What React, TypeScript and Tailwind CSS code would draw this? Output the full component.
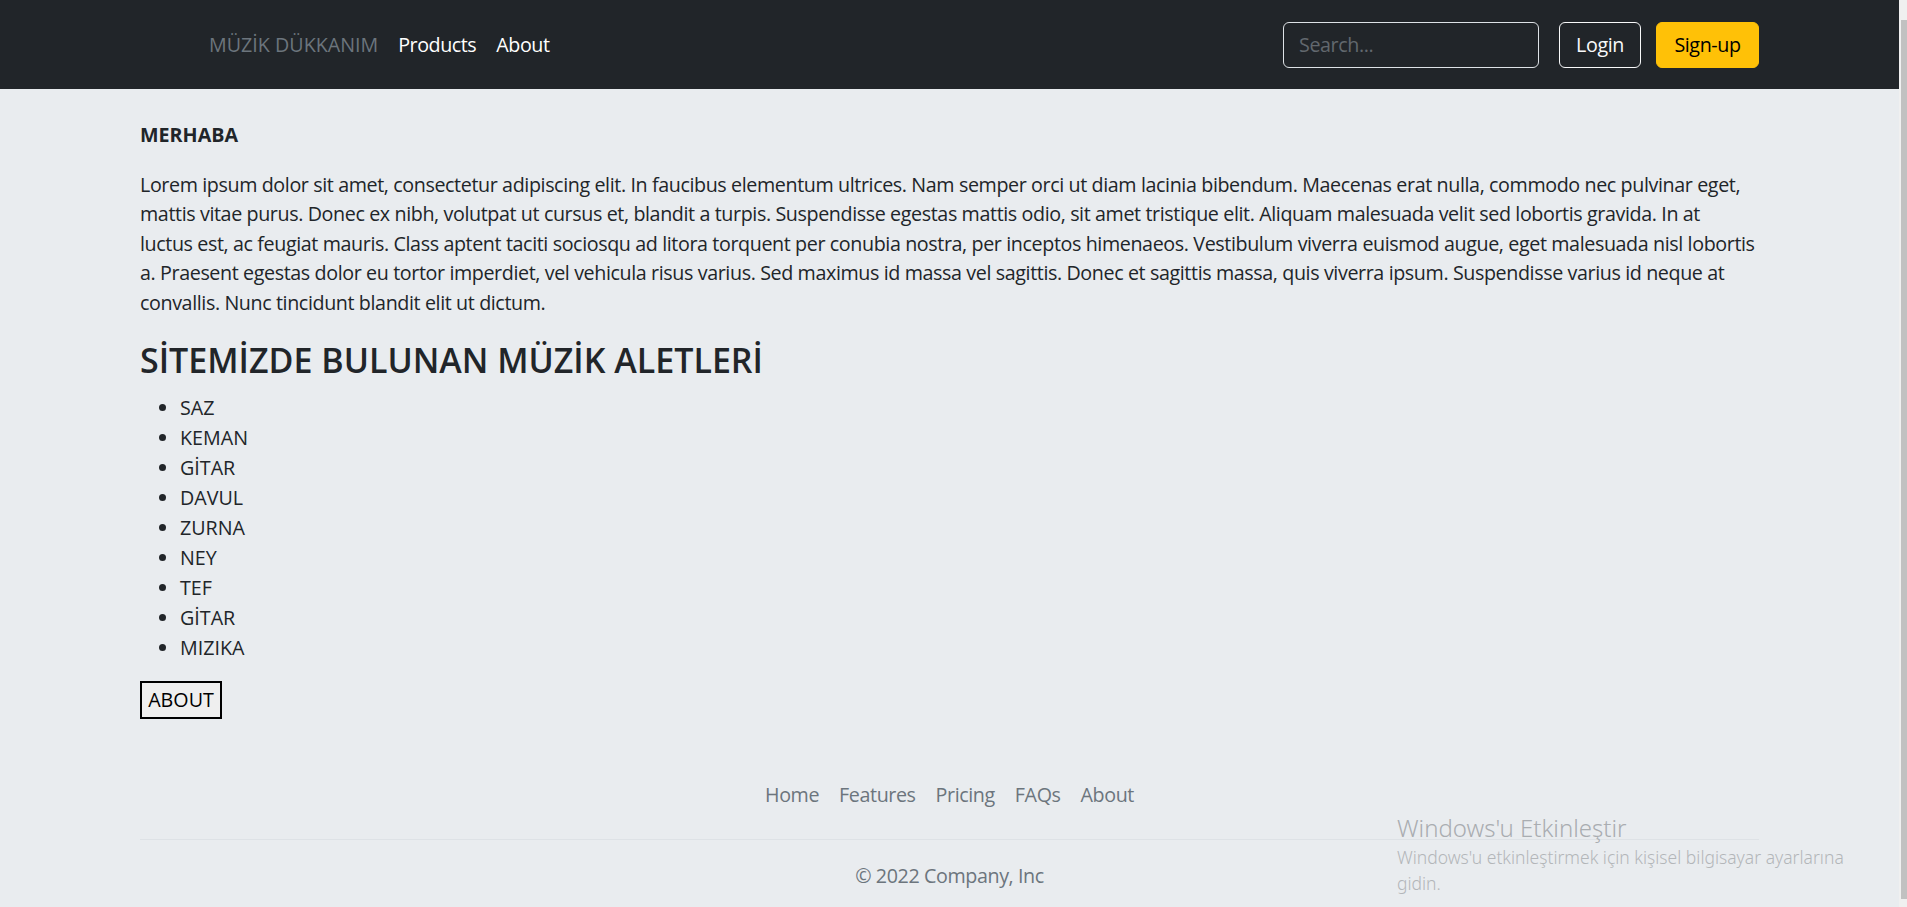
import React from "react";

const lines = [
  "Lorem ipsum dolor sit amet, consectetur adipiscing elit. In faucibus elementum ultrices. Nam semper orci ut diam lacinia bibendum. Maecenas erat nulla, commodo nec pulvinar eget,",
  "mattis vitae purus. Donec ex nibh, volutpat ut cursus et, blandit a turpis. Suspendisse egestas mattis odio, sit amet tristique elit. Aliquam malesuada velit sed lobortis gravida. In at",
  "luctus est, ac feugiat mauris. Class aptent taciti sociosqu ad litora torquent per conubia nostra, per inceptos himenaeos. Vestibulum viverra euismod augue, eget malesuada nisl lobortis",
  "a. Praesent egestas dolor eu tortor imperdiet, vel vehicula risus varius. Sed maximus id massa vel sagittis. Donec et sagittis massa, quis viverra ipsum. Suspendisse varius id neque at",
  "convallis. Nunc tincidunt blandit elit ut dictum.",
];

const items = ["SAZ", "KEMAN", "GİTAR", "DAVUL", "ZURNA", "NEY", "TEF", "GİTAR", "MIZIKA"];

export default function App() {
  return (
    <div className="flex h-[907px] w-full overflow-hidden bg-[#e9ecef] font-['Open_Sans','Noto_Sans',sans-serif] text-[19.7px] leading-[29.5px] text-[#212529]">
      <div className="relative min-w-0 flex-1">
        <header className="flex h-[89px] items-center bg-[#212529]">
          <div className="mx-auto flex w-[1619px] items-center">
            <div className="mr-[10px] h-[39px] w-[49px]" />
            <nav className="flex items-center">
              <a className="px-[10px] py-[10px] text-[#6c757d]">MÜZİK DÜKKANIM</a>
              <a className="px-[10px] py-[10px] tracking-[-0.45px] text-white">Products</a>
              <a className="px-[10px] py-[10px] tracking-[-0.45px] text-white">About</a>
            </nav>
            <div className="ml-auto flex items-center">
              <div className="mr-[20px] flex h-[46px] w-[256px] items-center rounded-[6px] border border-[#dee2e6] bg-[#212529] px-[15px] tracking-[-0.4px] text-[#62686e]">
                Search...
              </div>
              <button className="mr-[15px] flex h-[46px] w-[82px] items-center justify-center rounded-[6px] border border-[#f8f9fa] tracking-[-0.4px] text-[#f8f9fa]">
                Login
              </button>
              <button className="flex h-[46px] w-[103px] items-center justify-center rounded-[6px] border border-[#ffc107] bg-[#ffc107] tracking-[-0.4px] text-black">
                Sign-up
              </button>
            </div>
          </div>
        </header>

        <main className="mx-auto w-[1619px] pt-[31px]">
          <p className="mb-[20px] font-bold">MERHABA</p>
          <p className="mb-[20px] tracking-[-0.39px]">
            {lines.map((l, i) => (
              <span key={i} className="block whitespace-nowrap">
                {l}
              </span>
            ))}
          </p>
          <h2 className="mb-[9px] text-[34px] font-semibold leading-[47px]">SİTEMİZDE BULUNAN MÜZİK ALETLERİ</h2>
          <ul className="mb-[18px] list-disc pl-[40px]">
            {items.map((it, i) => (
              <li key={i} className="leading-[30px]">
                {it}
              </li>
            ))}
          </ul>
          <button className="h-[38px] w-[82px] border-2 border-black bg-[#efefef] text-black">ABOUT</button>
        </main>

        <footer className="mx-auto mt-[51px] w-[1619px] tracking-[-0.4px]">
          <ul className="flex justify-center border-b border-[#dee2e6] pb-[19px]">
            {["Home", "Features", "Pricing", "FAQs", "About"].map((l) => (
              <li key={l}>
                <a className="block px-[10px] py-[10px] text-[#6c757d]">{l}</a>
              </li>
            ))}
          </ul>
          <p className="mt-[21px] text-center text-[#6c757d]">© 2022 Company, Inc</p>
        </footer>

        <div className="absolute left-[1397px] top-[812px] font-['Noto_Sans','Open_Sans',sans-serif]">
          <div className="text-[24px] font-light leading-[32px] text-[#a9adb1]">Windows'u Etkinleştir</div>
          <div className="w-[460px] text-[17.5px] font-light leading-[26px] text-[#b3b6b9]">
            Windows'u etkinleştirmek için kişisel bilgisayar ayarlarına gidin.
          </div>
        </div>
      </div>
      <div className="flex w-[8px] flex-col bg-[#f0f0f0] pl-[2px]">
        <div className="h-[20px]" />
        <div className="h-[879px] bg-[#c1c1c1]" />
      </div>
    </div>
  );
}
